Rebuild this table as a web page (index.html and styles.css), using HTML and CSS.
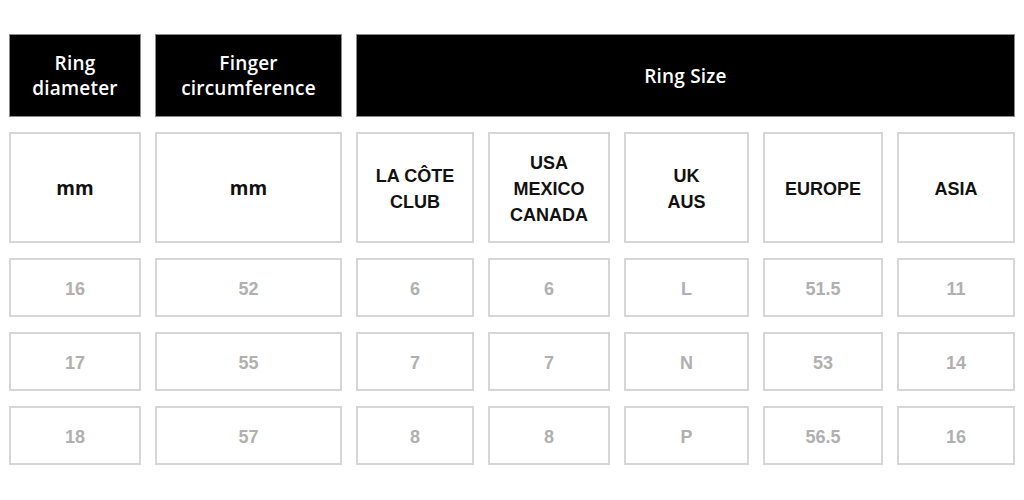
FILE: index.html
```html
<!DOCTYPE html>
<html lang="en">
<head>
<meta charset="utf-8">
<title>Ring size chart</title>
<link rel="stylesheet" href="styles.css">
</head>
<body>
<div class="chart">
  <div class="head">Ring<br>diameter</div>
  <div class="head">Finger<br>circumference</div>
  <div class="head span5">Ring Size</div>

  <div class="cell unit">mm</div>
  <div class="cell unit">mm</div>
  <div class="cell label">LA CÔTE<br>CLUB</div>
  <div class="cell label">USA<br>MEXICO<br>CANADA</div>
  <div class="cell label">UK<br>AUS</div>
  <div class="cell label">EUROPE</div>
  <div class="cell label">ASIA</div>

  <div class="cell val">16</div>
  <div class="cell val">52</div>
  <div class="cell val">6</div>
  <div class="cell val">6</div>
  <div class="cell val">L</div>
  <div class="cell val">51.5</div>
  <div class="cell val">11</div>

  <div class="cell val">17</div>
  <div class="cell val">55</div>
  <div class="cell val">7</div>
  <div class="cell val">7</div>
  <div class="cell val">N</div>
  <div class="cell val">53</div>
  <div class="cell val">14</div>

  <div class="cell val">18</div>
  <div class="cell val">57</div>
  <div class="cell val">8</div>
  <div class="cell val">8</div>
  <div class="cell val">P</div>
  <div class="cell val">56.5</div>
  <div class="cell val">16</div>
</div>
</body>
</html>
```
FILE: styles.css
```css
html, body {
  margin: 0;
  padding: 0;
  background: #ffffff;
}

body {
  padding: 34px 0 0 9px;
}

.chart {
  display: grid;
  grid-template-columns: 132px 187px 118px 122px 125px 120px 118px;
  grid-template-rows: 83px 111px 59px 59px 59px;
  column-gap: 14px;
  row-gap: 15px;
}

.head,
.cell {
  box-sizing: border-box;
  display: flex;
  align-items: center;
  justify-content: center;
  text-align: center;
}

.head {
  background: #000000;
  border: 1px solid #8a8a8a;
  color: #ffffff;
  font-family: "Open Sans", "Liberation Sans", sans-serif;
  font-weight: 600;
  font-size: 19px;
  line-height: 25px;
  letter-spacing: 0.2px;
  padding-top: 1px;
}

.span5 {
  grid-column: span 5;
}

.cell {
  border: 2px solid #d6d6d6;
  background: #ffffff;
}

.unit {
  font-family: "Open Sans", "Liberation Sans", sans-serif;
  font-weight: 700;
  font-size: 19px;
  color: #111111;
}

.label {
  font-family: "Liberation Sans", Arial, sans-serif;
  font-weight: 700;
  font-size: 18px;
  line-height: 26px;
  color: #111111;
  padding-top: 2px;
}

.val {
  font-family: "Liberation Sans", Arial, sans-serif;
  font-weight: 700;
  font-size: 18px;
  color: #b0b0b0;
  padding-top: 3px;
}
```
